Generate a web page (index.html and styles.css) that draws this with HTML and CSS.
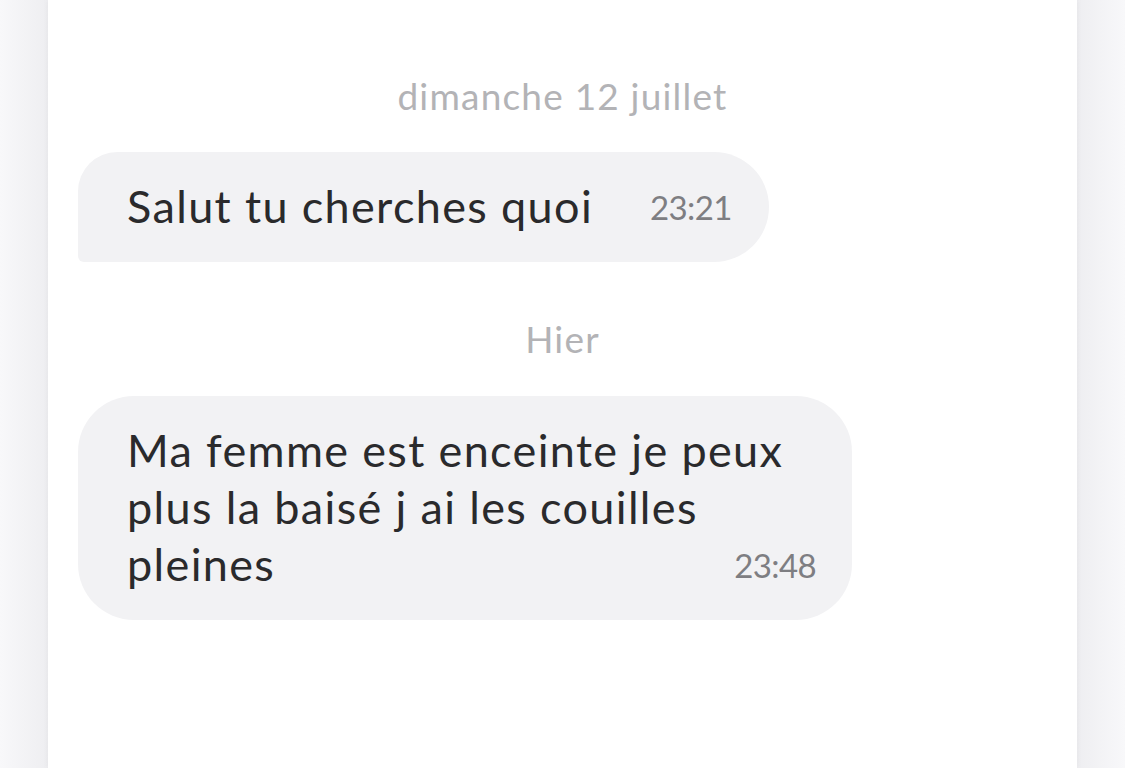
FILE: index.html
```html
<!DOCTYPE html>
<html lang="fr">
<head>
<meta charset="utf-8">
<title>Conversation</title>
<link rel="stylesheet" href="styles.css">
</head>
<body>
<div class="page">
  <main class="card">
    <div class="day">dimanche 12 juillet</div>
    <div class="bubble b1">
      <p class="msg">Salut tu cherches quoi <span class="time">23:21</span></p>
    </div>
    <div class="day day2">Hier</div>
    <div class="bubble b2">
      <p class="msg">Ma femme est enceinte je peux plus la baisé j ai les couilles pleines <span class="time">23:48</span></p>
    </div>
  </main>
</div>
</body>
</html>
```
FILE: styles.css
```css
html, body {
  margin: 0;
  padding: 0;
  height: 100%;
}
body {
  background: #f4f4f6;
  font-family: Lato, "Open Sans", sans-serif;
  overflow: hidden;
}
.page {
  display: flex;
  justify-content: center;
  height: 768px;
  background: linear-gradient(to right, #f8f8fa 0, #eeeef1 48px, #eeeef1 1077px, #f8f8fa 1125px);
}
.card {
  width: 1029px;
  background: #ffffff;
  box-shadow: 0 0 6px rgba(0, 0, 0, 0.05);
  padding: 73px 0 0 30px;
  box-sizing: border-box;
  display: flex;
  flex-direction: column;
  align-items: flex-start;
}
.day {
  align-self: stretch;
  padding-right: 30px;
  text-align: center;
  color: #b3b3b6;
  font-size: 37px;
  letter-spacing: 1.2px;
  line-height: 46px;
  margin-bottom: 33px;
}
.day2 {
  margin-top: 54px;
  margin-bottom: 34px;
}
.bubble {
  max-width: 774px;
  box-sizing: border-box;
  background: #f2f2f4;
  padding: 26px 37px 27px 49px;
  border-radius: 40px 56px 56px 6px;
}
.b2 {
  border-radius: 56px;
  padding-right: 36px;
}
.msg {
  margin: 0;
  color: #2a2a2c;
  font-size: 45px;
  letter-spacing: 1.35px;
  line-height: 57px;
  text-align: left;
  text-align-last: justify;
}
.time {
  display: inline-block;
  margin-left: 44px;
  color: #7e7e82;
  font-size: 33px;
  letter-spacing: -0.6px;
  line-height: 33px;
  vertical-align: 3px;
}
```
